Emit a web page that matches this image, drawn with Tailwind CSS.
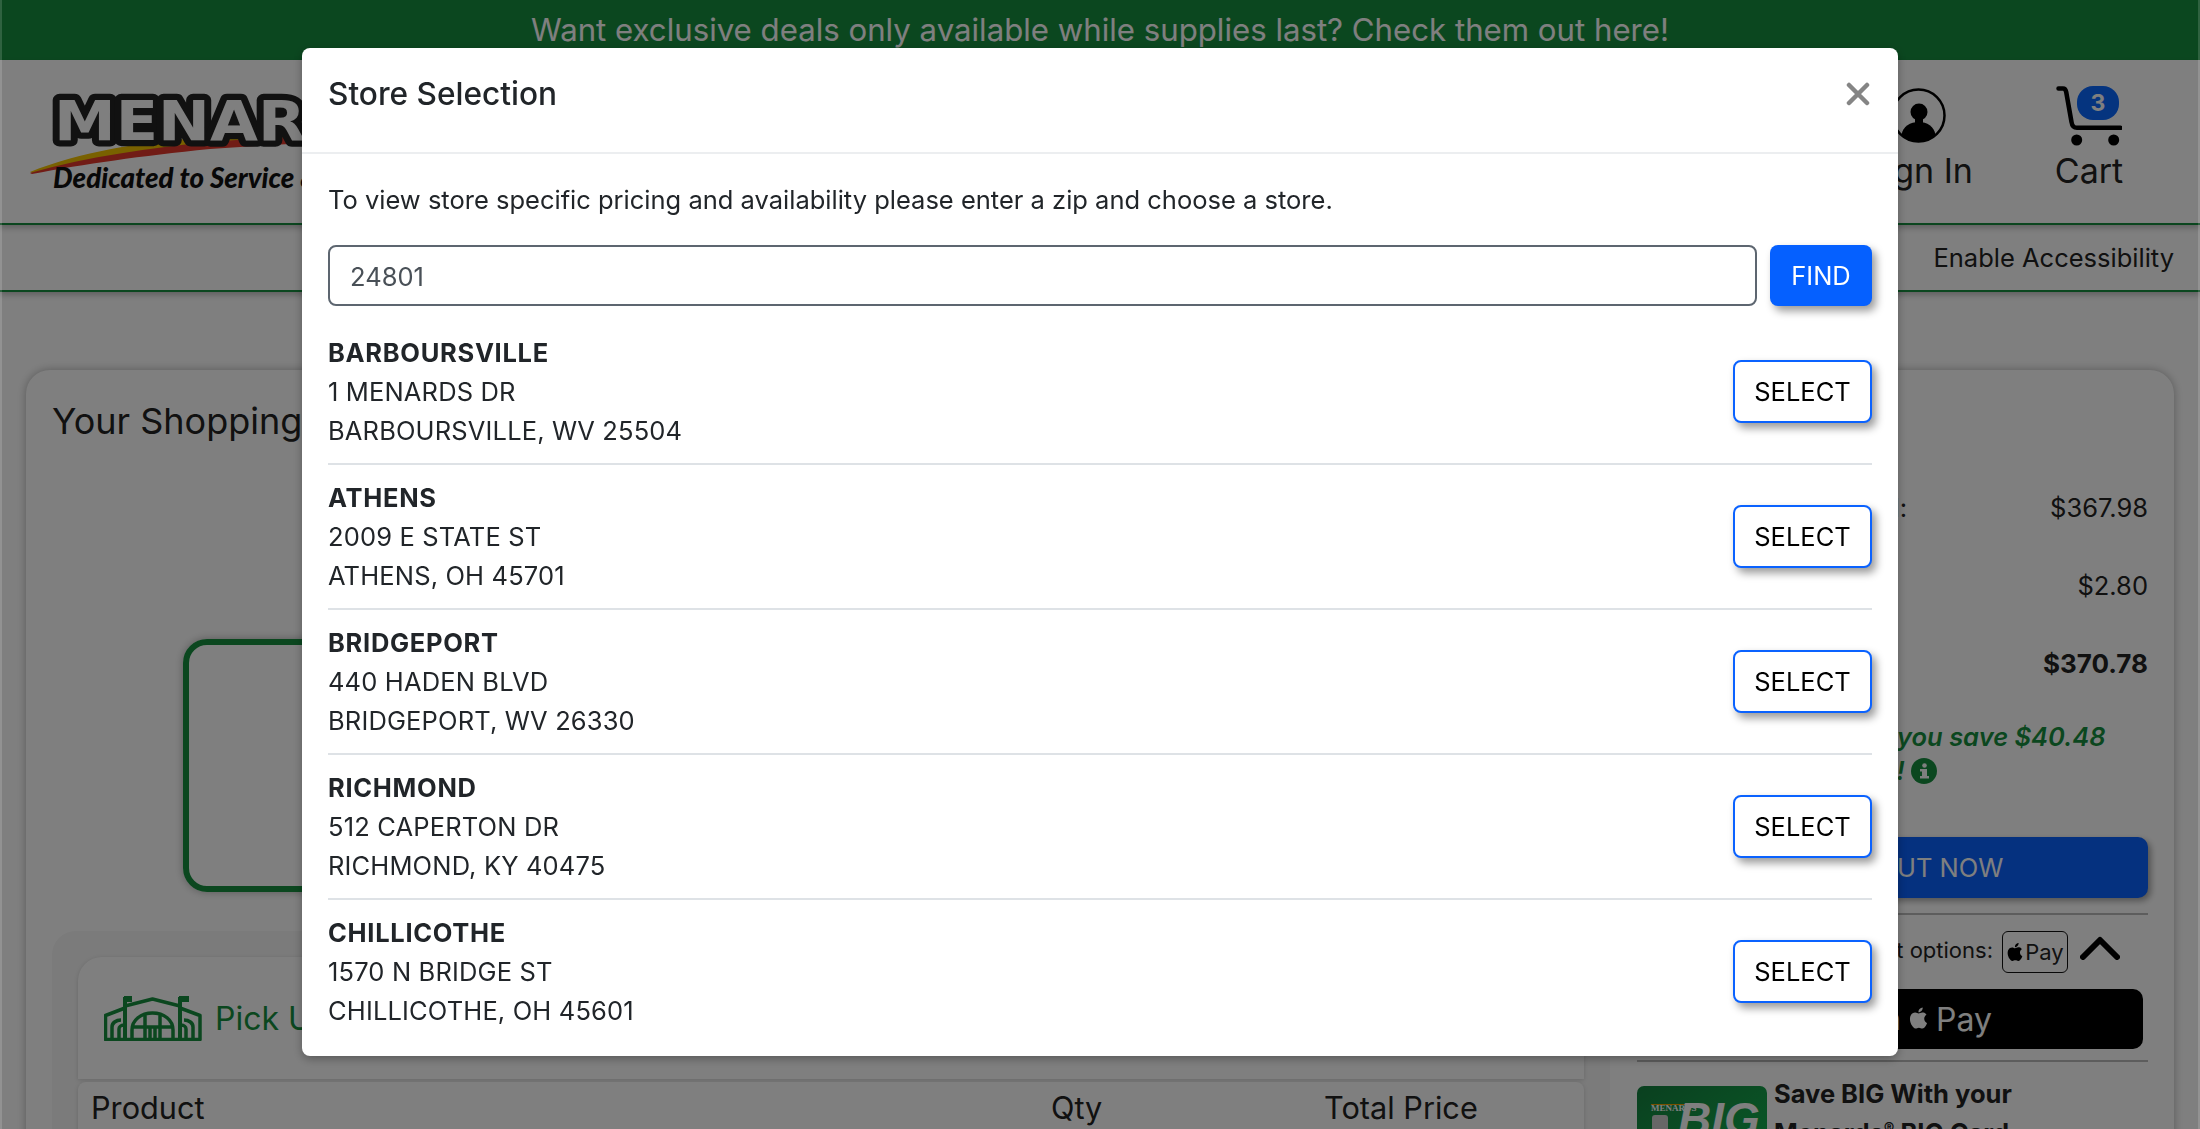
<!doctype html>
<html><head><meta charset="utf-8"><script src="https://cdn.jsdelivr.net/npm/@tailwindcss/browser@4"></script></head>
<body class="font-['Inter',sans-serif]">
<div class="relative h-[1129px] w-[2200px] overflow-hidden bg-white text-[#222]">
  <div class="flex h-[60px] items-center justify-center bg-[#178f3f] text-[31.2px] text-white">Want exclusive deals only available while supplies last? Check them out here!</div>
  <header class="flex h-[165px] items-start justify-between border-b-2 border-[#178f3f] pr-[78px] shadow-[0_3px_6px_rgba(0,0,0,0.25)]">
    <svg class="mt-[20px] ml-[20px]" width="500" height="120" viewBox="0 0 500 120">
      <path d="M10 92C60 72 120 62 180 58C250 54 330 52 420 54C330 56 240 60 170 66C110 72 60 82 12 93Z" fill="#f2c200"/>
      <path d="M10 93C70 76 130 68 190 62C260 56 340 54 420 56C340 60 260 64 190 69C120 76 65 84 12 94Z" fill="#e2392c"/>
      <g transform="translate(34,60) scale(1.17,1.03)"><text x="0" y="0" font-family="DejaVu Sans" font-weight="700" font-size="53" fill="#fff" stroke="#222" stroke-width="12" stroke-linejoin="round" paint-order="stroke fill">MENARDS</text></g>
      <text x="33" y="108" font-family="Lato" font-style="italic" font-weight="900" font-size="28" fill="#111" textLength="360" lengthAdjust="spacingAndGlyphs">Dedicated to Service &amp; Quality</text>
    </svg>
    <div class="flex gap-[85px] pt-[26px] text-[34px] leading-[40px]">
      <div class="flex w-[106px] flex-col items-center gap-[8px] pt-[2px]">
        <svg width="55" height="55" viewBox="0 0 55 55"><circle cx="27.5" cy="27.5" r="26" fill="none" stroke="#000" stroke-width="2.5"/><circle cx="28" cy="24" r="8.5"/><rect x="24" y="28" width="8" height="8"/><path d="M10.5 47C12 38 19 34 28 34C36 34 43 38 44.5 47A26 26 0 0 1 10.5 47Z"/></svg>
        <span class="whitespace-nowrap">Sign In</span>
      </div>
      <div class="relative flex w-[66px] flex-col items-center gap-[5px]">
        <svg width="66" height="60" viewBox="0 0 66 60"><path d="M2.5 2.5H7C9 2.500 9.800 4 10.200 6L15.500 36C16 39.500 18 41.800 21 41.800H64.500" fill="none" stroke="#000" stroke-width="4.500" stroke-linecap="round" stroke-linejoin="round"/><circle cx="20.700" cy="54" r="5.500"/><circle cx="57.700" cy="54" r="5.500"/></svg>
        <span>Cart</span>
        <span class="absolute top-0 left-[21px] flex h-[34px] w-[42px] items-center justify-center rounded-[16px] bg-[#0a68ff] text-[23px] font-bold text-white">3</span>
      </div>
    </div>
  </header>
  <nav class="flex h-[67px] items-center justify-end border-b-2 border-[#178f3f] pt-[1px] pr-[26px] text-[25.500px] shadow-[0_3px_6px_rgba(0,0,0,0.25)]">Enable Accessibility</nav>
  <main class="mx-[26px] mt-[78px] flex h-[800px] justify-between rounded-t-[24px] px-[26px] shadow-[0_0_10px_rgba(0,0,0,0.3)]">
    <div class="w-[1558px]">
      <h1 class="pt-[27px] text-[36px] leading-[48px]">Your Shopping Cart</h1>
      <div class="mt-[194px] ml-[131px] h-[253px] w-[1300px] rounded-[24px] border-[6px] border-[#178f3f] shadow-[0_0_8px_rgba(0,0,0,0.3)]"></div>
      <section class="mt-[39px] rounded-t-[24px] bg-[#f6f6f6] px-[26px] pt-[26px]">
        <div class="flex h-[122px] items-center gap-[13px] rounded-t-[24px] bg-white pl-[26px] shadow-[0_1px_4px_rgba(0,0,0,0.15)]">
          <svg width="98" height="45" viewBox="0 0 98 45" fill="none" stroke="#178f3f" stroke-width="3.500" stroke-linejoin="round">
            <path d="M21 10L48.500 3L76 10M21 12L1.500 19.500V43.500H96V19.500L76 12"/>
            <path d="M21 1V43M76 1V43" stroke-width="4"/>
            <path d="M20 3H28M75 3H85" stroke-width="6"/>
            <path d="M28 43V34C28 24 37 17 48.500 17C60 17 69 24 69 34V43M29 31H68M41 18V43M56 18V43M46 31V43M51 31V43"/>
            <path d="M8 43V31C8 27 12 24 17 24M15 43V33C15 31 17 29 20 29M89 43V31C89 27 85 24 80 24M82 43V33C82 31 80 29 77 29"/>
          </svg>
          <span class="pt-[2px] text-[32px] text-[#178f3f]">Pick Up</span>
        </div>
        <div class="mt-[3px] grid h-[60px] grid-cols-[960px_273px_1fr] rounded-t-[8px] bg-white pt-[6px] pl-[13px] text-[30.700px] leading-[40px] shadow-[0_1px_4px_rgba(0,0,0,0.15)]">
          <span>Product</span><span>Qty</span><span>Total Price</span>
        </div>
      </section>
    </div>
    <aside class="w-[511px] pt-[98px] text-[25.500px] leading-[39px]">
      <div class="flex h-[78px] items-center justify-between"><span>Merchandise Subtotal:</span><span>$367.98</span></div>
      <div class="flex h-[78px] items-center justify-between"><span>Estimated Tax:</span><span>$2.80</span></div>
      <div class="flex h-[78px] items-center justify-between text-[26px] font-bold"><span>Total:</span><span>$370.78</span></div>
      <p class="mt-[18px] text-[25.500px] leading-[34px] font-semibold text-[#178f3f] italic">Pay by BIG Card and you save $40.48<br><span class="inline-flex items-center gap-[6px] pl-[27px]">on this order today! <svg width="26" height="26" viewBox="0 0 26 26"><circle cx="13" cy="13" r="13" fill="#178f3f"/><rect x="11" y="11" width="5" height="9" fill="#fff"/><rect x="9" y="11" width="7" height="2.500" fill="#fff"/><rect x="9" y="18" width="9" height="2.500" fill="#fff"/><circle cx="13.500" cy="7.500" r="2.300" fill="#fff"/></svg></span></p>
      <div class="mt-[49px] flex h-[61px] items-center justify-center rounded-[10px] bg-[#0a62ff] text-white shadow-[3px_3px_6px_rgba(0,0,0,0.35)]">CHECK OUT NOW</div>
      <div class="mt-[15px] flex h-[60px] items-center justify-end gap-[9px] border-t-2 border-[#bbb] pt-[16px] pr-[28px] text-[22px]">
        <span class="mb-[4px]">Other payment options:</span>
        <span class="flex h-[42px] w-[66px] items-center justify-center gap-[1px] rounded-[6px] border-[1.500px] border-[#111] text-[22px] leading-none"><svg width="18" height="20" viewBox="0 0 24 24"><path d="M12.152 6.896c-.948 0-2.415-1.078-3.960-1.040-2.040.027-3.910 1.183-4.961 3.014-2.117 3.675-.546 9.103 1.519 12.090 1.013 1.454 2.208 3.090 3.792 3.039 1.520-.065 2.090-.987 3.935-.987 1.831 0 2.350.987 3.960.948 1.637-.026 2.676-1.480 3.676-2.948 1.156-1.688 1.636-3.325 1.662-3.415-.039-.013-3.182-1.221-3.220-4.857-.026-3.040 2.480-4.494 2.597-4.559-1.429-2.090-3.623-2.324-4.390-2.376-2-.156-3.675 1.090-4.610 1.090zM15.530 3.830c.843-1.012 1.400-2.427 1.245-3.830-1.207.052-2.662.805-3.532 1.818-.780.896-1.454 2.338-1.273 3.714 1.338.104 2.715-.688 3.559-1.701"/></svg>Pay</span>
        <svg class="mb-[8px] ml-[3px]" width="40" height="24" viewBox="0 0 40 24"><path d="M3 21L20 4L37 21" fill="none" stroke="#000" stroke-width="6" stroke-linecap="round" stroke-linejoin="round"/></svg>
      </div>
      <div class="mx-[5px] mt-[16px] flex h-[60px] items-center justify-end gap-[7px] rounded-[10px] bg-black pr-[151px] text-[29px] text-white">
        <span class="text-[30px]">Buy with</span>
        <svg class="mb-[3px]" width="21" height="26" viewBox="0 0 24 24" fill="#fff"><path d="M12.152 6.896c-.948 0-2.415-1.078-3.960-1.040-2.040.027-3.910 1.183-4.961 3.014-2.117 3.675-.546 9.103 1.519 12.090 1.013 1.454 2.208 3.090 3.792 3.039 1.520-.065 2.090-.987 3.935-.987 1.831 0 2.350.987 3.960.948 1.637-.026 2.676-1.480 3.676-2.948 1.156-1.688 1.636-3.325 1.662-3.415-.039-.013-3.182-1.221-3.220-4.857-.026-3.040 2.480-4.494 2.597-4.559-1.429-2.090-3.623-2.324-4.390-2.376-2-.156-3.675 1.090-4.610 1.090zM15.530 3.830c.843-1.012 1.400-2.427 1.245-3.830-1.207.052-2.662.805-3.532 1.818-.780.896-1.454 2.338-1.273 3.714 1.338.104 2.715-.688 3.559-1.701"/></svg>
        <span class="text-[32px]">Pay</span>
      </div>
      <div class="mt-[11px] flex items-start gap-[7px] border-t-2 border-[#bbb] pt-[24px]">
        <div class="relative h-[82px] w-[130px] shrink-0 overflow-hidden rounded-[7px] bg-gradient-to-br from-[#15803f] to-[#10b850]">
          <span class="absolute top-[3px] left-[14px] font-['Liberation_Serif',serif] text-[9px] font-bold text-white">MENARDS</span>
          <span class="absolute top-[18px] left-[14px] h-[1px] w-[36px] bg-[#f2a000]"></span>
          <span class="absolute top-[29px] left-[15px] h-[22px] w-[16px] rounded-[3px] bg-[#cfcfcf]"></span>
          <span class="absolute top-[14px] left-[41px] font-['Liberation_Sans',sans-serif] text-[46px] font-bold text-white italic">BIG</span>
        </div>
        <p class="-mt-[12px] font-bold">Save BIG With your<br>Menards<sup class="text-[16px]">®</sup> BIG Card</p>
      </div>
    </aside>
  </main>
</div>
<div class="fixed inset-0 bg-black/50"></div>
<div class="fixed inset-y-0 left-0 w-[2px] bg-white/15"></div>
<div class="fixed inset-y-0 right-0 w-[2px] bg-white/15"></div>
<div class="fixed top-[48px] left-[302px] w-[1596px] rounded-[8px] bg-white pb-[26px] text-[25.500px] leading-[39px] text-[#212529] shadow-[0_3px_10px_rgba(0,0,0,0.3)]">
  <div class="flex h-[106px] items-start justify-between border-b-2 border-[#eceef0] px-[26px] pt-[27px]">
    <h5 class="text-[31.600px] leading-[38px] font-medium">Store Selection</h5>
    <svg class="mt-[7px] mr-[2px]" width="24" height="24" viewBox="0 0 24 24"><path d="M3 3L21 21M21 3L3 21" stroke="#858585" stroke-width="4.500" stroke-linecap="round"/></svg>
  </div>
  <div class="px-[26px] pt-[26px]">
    <p>To view store specific pricing and availability please enter a zip and choose a store.</p>
    <div class="mt-[26px] flex gap-[13px]">
      <input class="h-[61px] min-w-0 flex-1 rounded-[8px] border-2 border-[#5d6670] bg-white px-[20px] pt-[2px] text-[#495057]" value="24801" readonly>
      <button class="h-[61px] w-[102px] rounded-[8px] bg-[#0560ff] text-white shadow-[4px_5px_8px_rgba(0,0,0,0.4)]">FIND</button>
    </div>
    <div class="mt-[14px] tracking-[0.15px]">
      <div class="flex h-[145px] items-center justify-between border-b-2 border-[#dee2e6]">
        <div><div class="font-bold tracking-[0.7px]">BARBOURSVILLE</div><div>1 MENARDS DR</div><div>BARBOURSVILLE, WV 25504</div></div>
        <button class="mb-[1px] h-[63px] w-[139px] rounded-[8px] border-2 border-[#0a62ff] bg-white tracking-normal text-black shadow-[4px_5px_8px_rgba(0,0,0,0.4)]">SELECT</button>
      </div>
      <div class="flex h-[145px] items-center justify-between border-b-2 border-[#dee2e6]">
        <div><div class="font-bold tracking-[0.7px]">ATHENS</div><div>2009 E STATE ST</div><div>ATHENS, OH 45701</div></div>
        <button class="mb-[1px] h-[63px] w-[139px] rounded-[8px] border-2 border-[#0a62ff] bg-white tracking-normal text-black shadow-[4px_5px_8px_rgba(0,0,0,0.4)]">SELECT</button>
      </div>
      <div class="flex h-[145px] items-center justify-between border-b-2 border-[#dee2e6]">
        <div><div class="font-bold tracking-[0.7px]">BRIDGEPORT</div><div>440 HADEN BLVD</div><div>BRIDGEPORT, WV 26330</div></div>
        <button class="mb-[1px] h-[63px] w-[139px] rounded-[8px] border-2 border-[#0a62ff] bg-white tracking-normal text-black shadow-[4px_5px_8px_rgba(0,0,0,0.4)]">SELECT</button>
      </div>
      <div class="flex h-[145px] items-center justify-between border-b-2 border-[#dee2e6]">
        <div><div class="font-bold tracking-[0.7px]">RICHMOND</div><div>512 CAPERTON DR</div><div>RICHMOND, KY 40475</div></div>
        <button class="mb-[1px] h-[63px] w-[139px] rounded-[8px] border-2 border-[#0a62ff] bg-white tracking-normal text-black shadow-[4px_5px_8px_rgba(0,0,0,0.4)]">SELECT</button>
      </div>
      <div class="flex items-center justify-between pt-[13px]">
        <div><div class="font-bold tracking-[0.7px]">CHILLICOTHE</div><div>1570 N BRIDGE ST</div><div>CHILLICOTHE, OH 45601</div></div>
        <button class="h-[63px] w-[139px] rounded-[8px] border-2 border-[#0a62ff] bg-white tracking-normal text-black shadow-[4px_5px_8px_rgba(0,0,0,0.4)]">SELECT</button>
      </div>
    </div>
  </div>
</div>
</body></html>
